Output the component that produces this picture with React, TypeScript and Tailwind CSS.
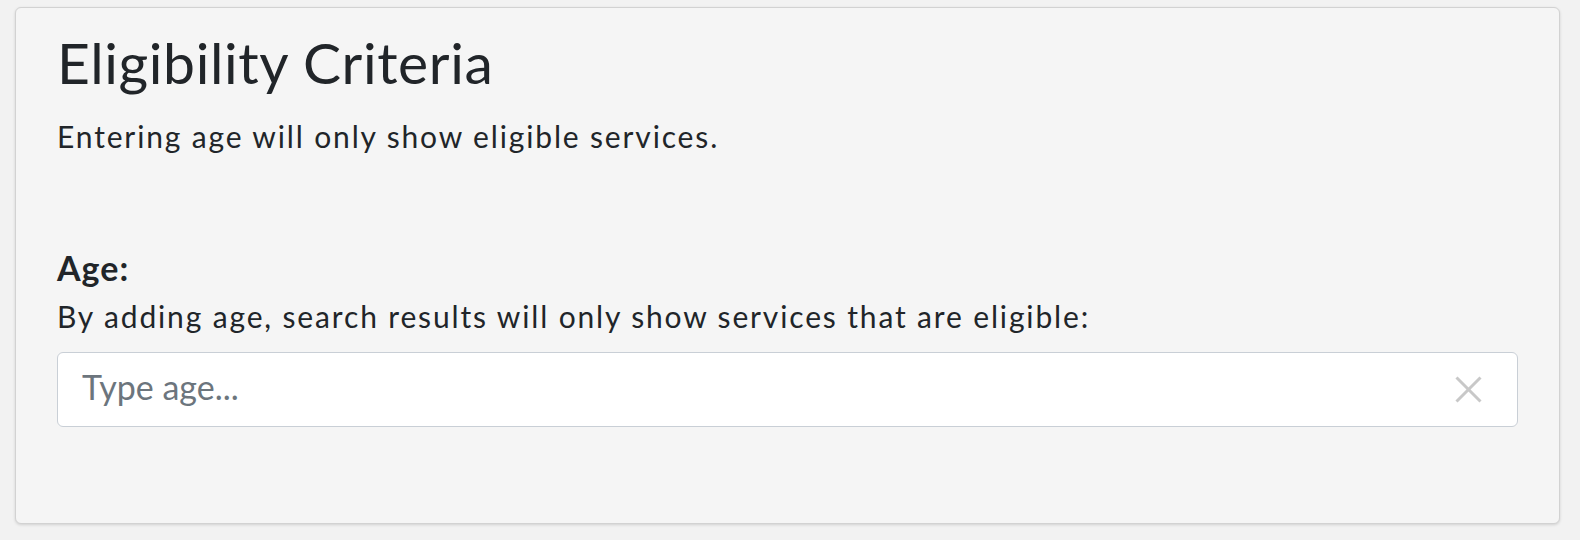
import React, { useState } from "react";

const font = "font-['Lato','Liberation_Sans',sans-serif]";

export default function App() {
  const [age, setAge] = useState("");

  return (
    <div className={`min-h-screen w-full bg-[#f2f2f2] pl-[15px] pr-[20px] pt-[7px] ${font}`}>
      {/* Eligibility card */}
      <div className="rounded-[6px] border border-[#d2d2d2] bg-[#f5f5f5] px-[41px] pt-[20px] pb-[96px] text-[#212529] shadow-[0_1px_3px_rgba(0,0,0,0.14)]">
        <h2 className="text-[57px] leading-[68px] font-normal tracking-[0.6px]">
          Eligibility Criteria
        </h2>
        <p className="mt-[22px] text-[30px] leading-[36px] tracking-[1.85px]">
          Entering age will only show eligible services.
        </p>

        {/* Age field */}
        <label htmlFor="age" className="mt-[94px] block text-[34px] leading-[40px] font-bold tracking-[1px]">
          Age:
        </label>
        <p className="mt-[10px] text-[30px] leading-[36px] tracking-[1.85px]">
          By adding age, search results will only show services that are eligible:
        </p>
        <div className="mt-[18px] flex h-[75px] items-center rounded-[6px] border border-[#c9cfd6] bg-white pr-[35px]">
          <input
            id="age"
            type="text"
            value={age}
            onChange={(e) => setAge(e.target.value)}
            placeholder="Type age..."
            className="h-full min-w-0 flex-1 bg-transparent pt-0 pb-[7px] pl-[24px] text-[34px] text-[#495057] outline-none placeholder:text-[#6c757d]"
          />
          <button type="button" onClick={() => setAge("")} className="flex h-[27px] w-[27px] items-center justify-center">
            <svg width="27" height="27" viewBox="0 0 27 27" fill="none" stroke="#c8c8c8" strokeWidth="3">
              <line x1="1.5" y1="1.5" x2="25.5" y2="25.5" />
              <line x1="25.5" y1="1.5" x2="1.5" y2="25.5" />
            </svg>
          </button>
        </div>
      </div>
    </div>
  );
}
